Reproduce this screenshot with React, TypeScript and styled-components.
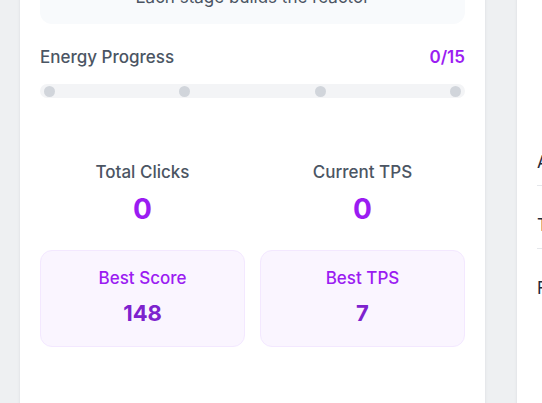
import React from "react";
import styled, { createGlobalStyle } from "styled-components";

const GlobalStyle = createGlobalStyle`
  html, body {
    margin: 0;
    padding: 0;
    background: #eef0f2;
    overflow: hidden;
    font-family: Inter, "Noto Sans", "Liberation Sans", sans-serif;
  }
  * { box-sizing: border-box; }
`;

const Page = styled.div`
  display: grid;
  grid-template-columns: 467px 320px;
  column-gap: 30px;
  align-items: start;
  padding-left: 19px;
  margin-top: -76px;
  width: 900px;
`;

const Card = styled.section`
  background: #ffffff;
  border: 1px solid #e6e8eb;
  border-radius: 12px;
  padding: 20px;
  min-height: 520px;
  display: flex;
  flex-direction: column;
  box-shadow: 0 1px 3px rgba(0, 0, 0, 0.04);
`;

const StageBox = styled.div`
  background: #f8fafc;
  border-radius: 12px;
  padding: 16px 16px 15px;
  text-align: center;
`;

const StageTitle = styled.div`
  font-size: 16px;
  line-height: 24px;
  font-weight: 600;
  color: #1f2937;
`;

const StageText = styled.div`
  font-size: 17px;
  line-height: 24px;
  color: #4b5563;
`;

const ProgressHeader = styled.div`
  display: flex;
  justify-content: space-between;
  align-items: center;
  margin-top: 21px;
  font-size: 17px;
  line-height: 24px;
`;

const ProgressLabel = styled.span`
  color: #4b5563;
  font-weight: 500;
`;

const ProgressValue = styled.span`
  color: #9b1cf2;
  font-weight: 600;
`;

const Track = styled.div`
  margin-top: 15px;
  height: 14px;
  border-radius: 999px;
  background: #f3f4f6;
  display: flex;
  align-items: center;
  justify-content: space-between;
  padding: 0 4px 0 4px;
`;

const Dot = styled.span`
  width: 11px;
  height: 11px;
  border-radius: 50%;
  background: #d1d5db;
`;

const StatsGrid = styled.div`
  display: grid;
  grid-template-columns: 1fr 1fr;
  gap: 25px 15px;
  margin-top: 62px;
`;

const Stat = styled.div`
  display: flex;
  flex-direction: column;
  align-items: center;
  gap: 9px;
`;

const StatLabel = styled.div`
  font-size: 17px;
  line-height: 24px;
  color: #4b5563;
  font-weight: 500;
`;

const StatValue = styled.div`
  font-size: 28px;
  line-height: 32px;
  font-weight: 700;
  color: #9b1cf2;
`;

const BestBox = styled.div`
  background: #faf5ff;
  border: 1px solid #f3e8ff;
  border-radius: 12px;
  padding: 15px 16px 19px;
  display: flex;
  flex-direction: column;
  align-items: center;
  gap: 9px;
`;

const BestLabel = styled.div`
  font-size: 17px;
  line-height: 24px;
  color: #9b1cf2;
  font-weight: 500;
`;

const BestValue = styled.div`
  font-size: 22px;
  line-height: 28px;
  font-weight: 700;
  color: #7e22ce;
`;

const SideList = styled.div`
  margin-top: 205px;
`;

const SideRow = styled.div`
  display: flex;
  justify-content: space-between;
  padding: 27px 0 11px;
  font-size: 17px;
  line-height: 24px;
  color: #1f2937;
  border-bottom: 1px solid #e5e7eb;

  &:first-child {
    padding-top: 0;
  }
  &:last-child {
    border-bottom: none;
  }
`;

export default function App() {
  return (
    <>
      <GlobalStyle />
      <Page>
        <Card>
          <StageBox>
            <StageTitle>Stage 1 of 4</StageTitle>
            <StageText>Each stage builds the reactor</StageText>
          </StageBox>
          <ProgressHeader>
            <ProgressLabel>Energy Progress</ProgressLabel>
            <ProgressValue>0/15</ProgressValue>
          </ProgressHeader>
          <Track>
            <Dot />
            <Dot />
            <Dot />
            <Dot />
          </Track>
          <StatsGrid>
            <Stat>
              <StatLabel>Total Clicks</StatLabel>
              <StatValue>0</StatValue>
            </Stat>
            <Stat>
              <StatLabel>Current TPS</StatLabel>
              <StatValue>0</StatValue>
            </Stat>
            <BestBox>
              <BestLabel>Best Score</BestLabel>
              <BestValue>148</BestValue>
            </BestBox>
            <BestBox>
              <BestLabel>Best TPS</BestLabel>
              <BestValue>7</BestValue>
            </BestBox>
          </StatsGrid>
        </Card>
        <Card>
          <SideList>
            <SideRow>
              <span>Average TPS</span>
              <span>0.0</span>
            </SideRow>
            <SideRow>
              <span>Time Played</span>
              <span>0s</span>
            </SideRow>
            <SideRow>
              <span>Fastest Stage</span>
              <span>—</span>
            </SideRow>
          </SideList>
        </Card>
      </Page>
    </>
  );
}
